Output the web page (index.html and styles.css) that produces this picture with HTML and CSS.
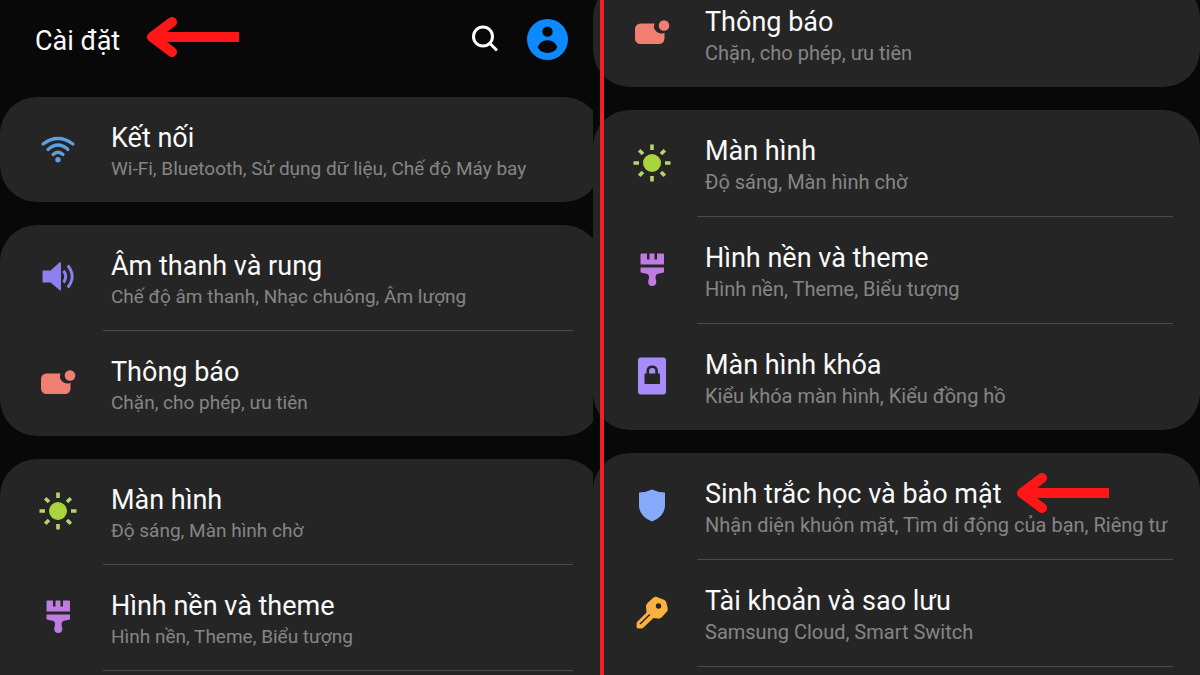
FILE: index.html
```html
<!DOCTYPE html>
<html lang="vi">
<head>
    <meta charset="UTF-8">
    <meta name="viewport" content="width=device-width, initial-scale=1.0">
    <title>Cài đặt</title>
    <link rel="stylesheet" href="styles.css">
</head>
<body>
    <!-- Shared icons -->
    <svg class="sprite" aria-hidden="true">
        <symbol id="arrow" viewBox="0 0 92 40">
            <path d="M9 20H92" fill="none" stroke="#ff1616" stroke-width="10"/>
            <path d="M25 5L5 20L25 35" fill="none" stroke="#ff1616" stroke-width="10" stroke-linecap="round" stroke-linejoin="round"/>
        </symbol>
        <symbol id="notification" viewBox="0 0 38 38">
            <path fill="#f07f72" d="M7.500 9.500H21.600A7.200 7.200 0 0 0 31.500 18.700V24.500A5.500 5.500 0 0 1 26 30H7.500A5.500 5.500 0 0 1 2 24.500V15A5.500 5.500 0 0 1 7.500 9.500Z"/>
            <circle cx="31" cy="11.500" r="5.300" fill="#f07f72"/>
        </symbol>
        <symbol id="sun" viewBox="0 0 38 38">
            <circle cx="19" cy="19" r="9" fill="#a8d43c"/>
            <g stroke="#b4d568" stroke-width="3.600">
                <path d="M19 .500V6M19 32V37.500M.500 19H6M32 19H37.500"/>
                <path d="M6.200 6.200L10 10M28 28L31.800 31.800M6.200 31.800L10 28M28 10L31.800 6.200"/>
            </g>
        </symbol>
        <symbol id="brush" viewBox="0 0 38 38">
            <g fill="#c07be0">
                <path d="M8.500 2.500H14V8.500H16.500V2.500H21.500V8.500H24V2.500H30A1 1 0 0 1 31 3.500V13.500H7.500V3.500A1 1 0 0 1 8.500 2.500Z"/>
                <path d="M7.500 16.500H31V20.500Q31 21.500 30 21.800L25 22.800Q22.600 23.400 22.600 25.500V27.500Q23.300 29 23.300 31Q23 35 19.200 35Q15.400 35 15.200 31Q15.200 29 16 27.500V25.500Q16 23.400 13.500 22.800L8.500 21.800Q7.500 21.500 7.500 20.500Z"/>
            </g>
        </symbol>
    </svg>

    <main class="screens">
        <section class="screen">
            <header class="header">
                <h1>Cài đặt</h1>
                <svg class="arrow" aria-hidden="true"><use href="#arrow"/></svg>
                <button type="button" class="search" aria-label="Tìm kiếm">
                    <svg viewBox="0 0 28 28"><circle cx="12" cy="11.500" r="9.500"/><path d="M18.800 18.300L26 25.500"/></svg>
                </button>
                <button type="button" class="account" aria-label="Tài khoản">
                    <svg viewBox="0 0 42 42">
                        <circle cx="21" cy="21" r="21" fill="#0b8bff"/>
                        <circle cx="21" cy="13" r="5.300" fill="#080808"/>
                        <path fill="#080808" d="M10.800 29Q13.500 21.700 21 21.700T31.200 29Q28 34.800 21 34.800T10.800 29Z"/>
                    </svg>
                </button>
            </header>

            <nav class="cards">
                <div class="card">
                    <a class="row" href="#">
                        <svg class="icon" viewBox="0 0 38 38">
                            <g fill="none" stroke="#5d9fe0" stroke-width="3.200" stroke-linecap="round">
                                <path d="M4 14Q19 3 34 14"/>
                                <path d="M9 19.500Q19 10.500 29 19.500"/>
                                <path d="M14 24.500Q19 20 24 24.500"/>
                            </g>
                            <circle cx="19" cy="29.700" r="2.700" fill="#5d9fe0"/>
                        </svg>
                        <div class="text">
                            <h2>Kết nối</h2>
                            <p>Wi-Fi, Bluetooth, Sử dụng dữ liệu, Chế độ Máy bay</p>
                        </div>
                    </a>
                </div>

                <div class="card">
                    <a class="row" href="#">
                        <svg class="icon" viewBox="0 0 38 38">
                            <path fill="#8a80ee" d="M4 12.500H11.500L20.500 4.500Q22 3.800 22 5.500V31.500Q22 33 20.500 32L11.500 24.500H4Q3.500 24.500 3.500 24V13Q3.500 12.500 4 12.500Z"/>
                            <path fill="none" stroke="#8a80ee" stroke-width="3" d="M24.500 12.800Q29 18.500 24.500 24.500M28.800 7.500Q37.500 18.500 28.800 29.500"/>
                        </svg>
                        <div class="text">
                            <h2>Âm thanh và rung</h2>
                            <p>Chế độ âm thanh, Nhạc chuông, Âm lượng</p>
                        </div>
                    </a>
                    <a class="row" href="#">
                        <svg class="icon"><use href="#notification"/></svg>
                        <div class="text">
                            <h2>Thông báo</h2>
                            <p>Chặn, cho phép, ưu tiên</p>
                        </div>
                    </a>
                </div>

                <div class="card continued">
                    <a class="row" href="#">
                        <svg class="icon"><use href="#sun"/></svg>
                        <div class="text">
                            <h2>Màn hình</h2>
                            <p>Độ sáng, Màn hình chờ</p>
                        </div>
                    </a>
                    <a class="row" href="#">
                        <svg class="icon"><use href="#brush"/></svg>
                        <div class="text">
                            <h2>Hình nền và theme</h2>
                            <p>Hình nền, Theme, Biểu tượng</p>
                        </div>
                    </a>
                </div>
            </nav>
        </section>

        <section class="screen scrolled">
            <nav class="cards">
                <div class="card">
                    <a class="row" href="#">
                        <svg class="icon"><use href="#notification"/></svg>
                        <div class="text">
                            <h2>Thông báo</h2>
                            <p>Chặn, cho phép, ưu tiên</p>
                        </div>
                    </a>
                </div>

                <div class="card">
                    <a class="row" href="#">
                        <svg class="icon"><use href="#sun"/></svg>
                        <div class="text">
                            <h2>Màn hình</h2>
                            <p>Độ sáng, Màn hình chờ</p>
                        </div>
                    </a>
                    <a class="row" href="#">
                        <svg class="icon"><use href="#brush"/></svg>
                        <div class="text">
                            <h2>Hình nền và theme</h2>
                            <p>Hình nền, Theme, Biểu tượng</p>
                        </div>
                    </a>
                    <a class="row" href="#">
                        <svg class="icon" viewBox="0 0 38 38">
                            <rect x="5" y=".500" width="28" height="37" rx="3" fill="#a78bfa"/>
                            <rect x="11.500" y="16.500" width="15.500" height="10.500" rx="1" fill="#252525"/>
                            <path fill="none" stroke="#252525" stroke-width="2.600" d="M14.800 17V14Q14.800 9.800 19.200 9.800T23.600 14V17"/>
                        </svg>
                        <div class="text">
                            <h2>Màn hình khóa</h2>
                            <p>Kiểu khóa màn hình, Kiểu đồng hồ</p>
                        </div>
                    </a>
                </div>

                <div class="card continued">
                    <a class="row" href="#">
                        <svg class="icon" viewBox="0 0 38 38">
                            <path fill="#86abfb" d="M19 2.500Q25 5.500 32 5.500V18Q32 29.500 19 34.500Q6 29.500 6 18V5.500Q13 5.500 19 2.500Z"/>
                        </svg>
                        <div class="text">
                            <h2>Sinh trắc học và bảo mật <svg class="arrow" aria-hidden="true"><use href="#arrow"/></svg></h2>
                            <p>Nhận diện khuôn mặt, Tìm di động của bạn, Riêng tư</p>
                        </div>
                    </a>
                    <a class="row" href="#">
                        <svg class="icon" viewBox="0 0 38 38">
                            <path fill="#fcb040" d="M20.500 3.500Q22 2.500 24 3L31.500 6Q33 7 33.500 9L34.800 14.500Q35 16 34 17.500L28.500 23.500Q27 24.800 25 24.600L20.500 24L10.500 33.500Q9.500 34.500 8 34.500H5Q3.600 34.300 3.600 33V29.500Q3.600 28.500 4.500 27.500L13.500 18.500L13 12.500Q13 10.500 14.500 9Z"/>
                            <circle cx="25.500" cy="12" r="2.700" fill="#252525"/>
                            <path fill="none" stroke="#252525" stroke-width="1.500" d="M16.800 20.500L7 30"/>
                        </svg>
                        <div class="text">
                            <h2>Tài khoản và sao lưu</h2>
                            <p>Samsung Cloud, Smart Switch</p>
                        </div>
                    </a>
                </div>
            </nav>
        </section>
    </main>
</body>
</html>
```

FILE: styles.css
```css
* {
    box-sizing: border-box;
}

body {
    margin: 0;
    background-color: #080808;
    color: #fafafa;
    font-family: Roboto, "Noto Sans", sans-serif;
}

h1, h2, p {
    margin: 0;
    font-weight: 400;
    white-space: nowrap;
}

.sprite {
    display: none;
}

.screens {
    position: relative;
    display: grid;
    grid-template-columns: 593fr 607fr;
    height: 100vh;
    overflow: hidden;
}

/* red line between the two screens */
.screens::after {
    content: "";
    position: absolute;
    top: 0;
    bottom: 0;
    left: 50%;
    width: 4px;
    background-color: #ec2227;
}

.screen {
    display: flex;
    flex-direction: column;
    min-width: 0;
    min-height: 0;
    overflow: hidden;
}

.header {
    display: flex;
    align-items: center;
    height: 78px;
    margin-bottom: 19px;
    padding: 0 25px 0 35px;
    flex-shrink: 0;
}

h1 {
    padding-top: 4px;
    font-size: 27px;
    line-height: 34px;
}

.arrow {
    width: 92px;
    height: 40px;
    flex-shrink: 0;
}

.header .arrow {
    margin: 0 auto 4px 27px;
}

.search,
.account {
    padding: 0;
    border: none;
    background: none;
    cursor: pointer;
}

.search svg,
.account svg {
    display: block;
}

.search svg {
    width: 28px;
    height: 28px;
    fill: none;
    stroke: #fff;
    stroke-width: 3;
}

.account {
    margin-left: 28px;
}

.account svg {
    width: 41px;
    height: 41px;
}

.cards {
    display: flex;
    flex-direction: column;
    flex: 1;
    gap: 23px;
    margin-right: -8px;
}

.card {
    flex-shrink: 0;
    border-radius: 37px;
    background-color: #252525;
}

.row {
    display: flex;
    align-items: center;
    gap: 26px;
    padding: 0 28px 0 39px;
    color: inherit;
    text-decoration: none;
}

.icon {
    width: 38px;
    height: 38px;
    margin-bottom: 2px;
    flex-shrink: 0;
}

.text {
    flex: 1;
    min-width: 0;
    padding: 24px 0 19px 8px;
    border-bottom: 1px solid #4a4a4a;
}

.row:last-child .text {
    border-bottom: none;
}

h2 {
    display: flex;
    align-items: center;
    gap: 15px;
    font-size: 27px;
    line-height: 34px;
}

h2 .arrow {
    margin: -6px 0 -4px;
}

p {
    color: #858585;
    font-size: 19px;
    line-height: 28px;
}

/* card that runs on below the edge of the screen */
.card.continued {
    flex: 1 0 auto;
    border-radius: 37px 37px 0 0;
}

.card.continued .row:last-child .text {
    border-bottom: 1px solid #4a4a4a;
}

.scrolled .cards {
    margin-top: -19px;
    margin-right: 0;
}

.scrolled .row {
    padding: 0 27px 0 40px;
}

.scrolled .text {
    padding: 24px 0 20px 8px;
}

.scrolled p {
    font-size: 20px;
}
```
